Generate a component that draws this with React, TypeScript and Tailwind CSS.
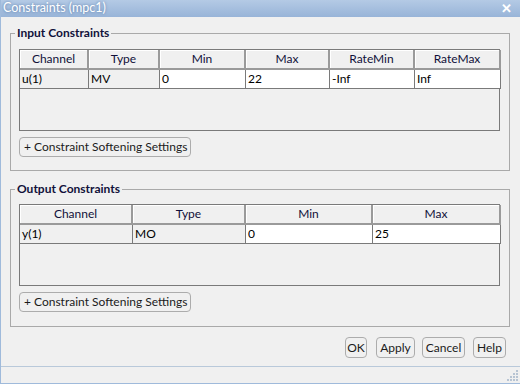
import React from "react";

interface Col {
  label: string;
  width: number;
}

interface Cell {
  value: string;
  editable: boolean;
}

const inputCols: Col[] = [
  { label: "Channel", width: 69 },
  { label: "Type", width: 71 },
  { label: "Min", width: 86 },
  { label: "Max", width: 84 },
  { label: "RateMin", width: 85 },
  { label: "RateMax", width: 86 },
];

const inputRow: Cell[] = [
  { value: "u(1)", editable: false },
  { value: "MV", editable: false },
  { value: "0", editable: true },
  { value: "22", editable: true },
  { value: "-Inf", editable: true },
  { value: "Inf", editable: true },
];

const outputCols: Col[] = [
  { label: "Channel", width: 113 },
  { label: "Type", width: 113 },
  { label: "Min", width: 127 },
  { label: "Max", width: 128 },
];

const outputRow: Cell[] = [
  { value: "y(1)", editable: false },
  { value: "MO", editable: false },
  { value: "0", editable: true },
  { value: "25", editable: true },
];

function ConstraintTable({ cols, row }: { cols: Col[]; row: Cell[] }) {
  return (
    <div className="h-[82px] w-[481px] border border-[#7a7a7a] bg-[#f0f0f0] flex flex-col">
      <div className="flex h-[20px]">
        {cols.map((c) => (
          <div
            key={c.label}
            style={{ width: c.width }}
            className="h-full flex items-center justify-center border-r-2 border-b-2 border-[#9a9a9a] bg-[#f0f0f0] shadow-[inset_1px_1px_0_#ffffff] text-[#10103a] shrink-0"
          >
            {c.label}
          </div>
        ))}
      </div>
      <div className="flex h-[19px]">
        {row.map((cell, i) => (
          <div
            key={i}
            style={{ width: cols[i].width }}
            className={
              cell.editable
                ? "h-full flex items-center pl-[2px] border-r border-b border-[#7a7a7a] bg-white shrink-0"
                : "h-full flex items-center pl-[2px] border-r border-b border-[#7a7a7a] bg-[#f0f0f0] shrink-0"
            }
          >
            {cell.value}
          </div>
        ))}
      </div>
    </div>
  );
}

function SoftenButton() {
  return (
    <button className="h-[20px] w-[172px] rounded-[4px] border border-[#acacac] bg-[#f0f0f0] flex items-center pl-[4px] whitespace-nowrap text-[#1b1b1b]">
      + Constraint Softening Settings
    </button>
  );
}

function Group({
  title,
  cols,
  row,
  className,
}: {
  title: string;
  cols: Col[];
  row: Cell[];
  className: string;
}) {
  return (
    <div className={"relative ml-[9px] mr-[10px] h-[138px] shrink-0 border border-[#a9a9a9] px-2 " + className}>
      <span className="absolute left-[4px] top-[-9px] px-[2px] bg-[#f0f0f0] font-bold leading-[16px] text-[#10103a]">
        {title}
      </span>
      <ConstraintTable cols={cols} row={row} />
      <div className="mt-[6px]">
        <SoftenButton />
      </div>
    </div>
  );
}

const actions = [
  { label: "OK", cls: "w-[22px]" },
  { label: "Apply", cls: "w-[39px] ml-[9px]" },
  { label: "Cancel", cls: "w-[43px] ml-[7px]" },
  { label: "Help", cls: "w-[33px] ml-[8px]" },
];

export default function App() {
  return (
    <div className="w-[520px] h-[384px] bg-[#f0f0f0] border-l border-b border-[#9fbadb] flex flex-col text-[12px] font-['Lato',sans-serif] text-black overflow-hidden">
      <div className="h-[17px] shrink-0 bg-gradient-to-b from-[#b4cae5] to-[#98b4d8] flex items-center justify-between pl-[2px] pr-[8px]">
        <span className="text-white text-[12.5px] leading-none [text-shadow:0_0_3px_#4f74a3]">
          Constraints (mpc1)
        </span>
        <span className="text-white text-[13px] leading-none font-bold">✕</span>
      </div>

      <Group title="Input Constraints" cols={inputCols} row={inputRow} className="mt-[16px] pt-[15px]" />
      <Group title="Output Constraints" cols={outputCols} row={outputRow} className="mt-[18px] pt-[14px]" />

      <div className="mt-[10px] flex justify-end pr-[14px]">
        {actions.map((b) => (
          <button
            key={b.label}
            className={
              "h-[21px] rounded-[4px] border border-[#acacac] bg-[#f0f0f0] text-[#1b1b1b] flex items-center justify-center " +
              b.cls
            }
          >
            {b.label}
          </button>
        ))}
      </div>

      <div className="mt-auto h-[17px] border-t border-[#b9c9da] flex justify-end items-end pr-[2px] pb-[2px]">
        <svg width="11" height="11" viewBox="0 0 11 11">
          {[
            [9, 1],
            [6, 4],
            [9, 4],
            [3, 7],
            [6, 7],
            [9, 7],
            [0, 10],
            [3, 10],
            [6, 10],
            [9, 10],
          ].map(([x, y], i) => (
            <rect key={i} x={x} y={y - 1} width="2" height="2" fill="#b7c4d3" />
          ))}
        </svg>
      </div>
    </div>
  );
}
